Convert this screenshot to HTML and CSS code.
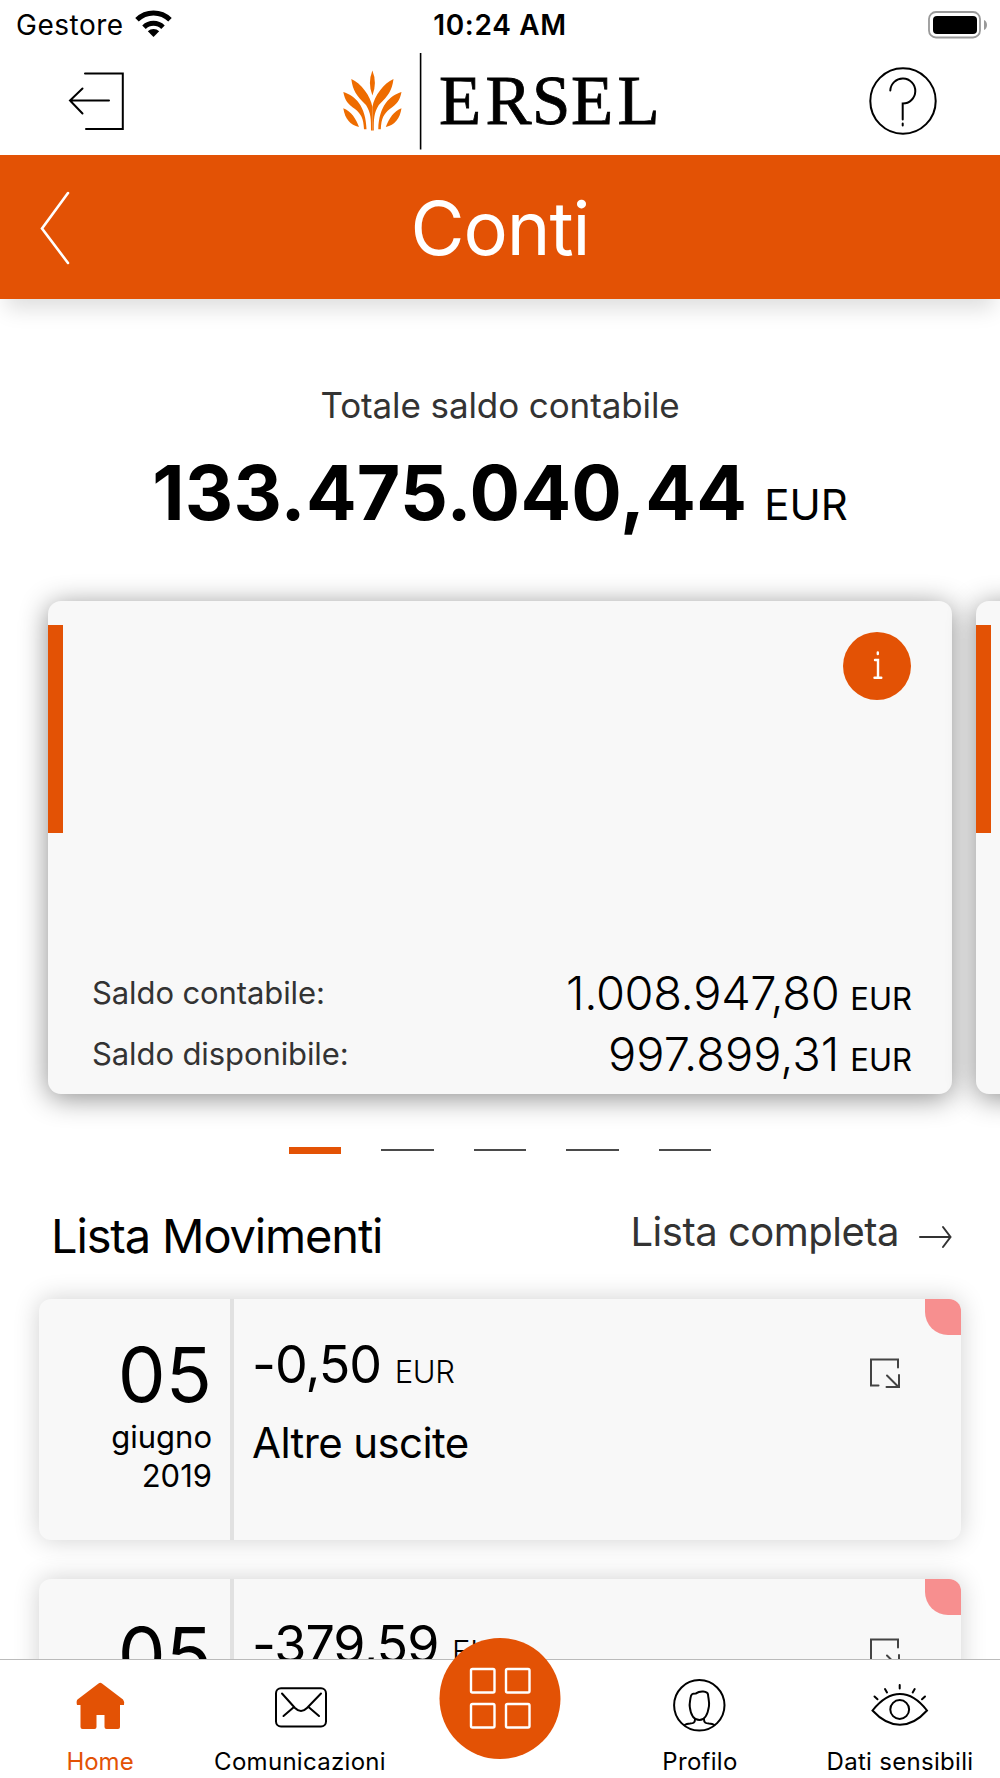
FILE: index.html
```
<!DOCTYPE html>
<html lang="it">
<head>
    <meta charset="UTF-8">
    <meta name="viewport" content="width=device-width, initial-scale=1.0">
    <title>Ersel - Conti</title>
    <link rel="stylesheet" href="styles.css">
</head>
<body>
    <!-- Status bar -->
    <div class="status-bar">
        <div class="carrier">
            <span>Gestore</span>
            <svg width="37" height="28" viewBox="0 0 37 28">
                <path d="M18.5 27 L12.8 21.3 A8.3 8.3 0 0 1 24.2 21.3 Z"/>
                <path d="M9 17.2 A13.6 13.6 0 0 1 28 17.2" fill="none" stroke="#000" stroke-width="5"/>
                <path d="M2 9.8 A23.6 23.6 0 0 1 35 9.8" fill="none" stroke="#000" stroke-width="5"/>
            </svg>
        </div>
        <div class="time">10:24 AM</div>
        <svg class="battery" width="60" height="28" viewBox="0 0 60 28">
            <rect x="1" y="1" width="51" height="25.5" rx="7" fill="none" stroke="#999" stroke-width="1.8"/>
            <rect x="5" y="5" width="44" height="18" rx="4"/>
            <path d="M56 9 C60 10.5 60 17.5 56 19 Z" fill="#999"/>
        </svg>
    </div>

    <!-- Brand header -->
    <header class="header">
        <svg class="icon-exit" width="60" height="64" viewBox="0 0 60 64">
            <path d="M18 5.5 H55.8 V61 H19 M42 32.5 H3 M15.5 20.5 L3 32.5 L15.5 45.5"/>
        </svg>
        <svg class="logo" width="320" height="105" viewBox="0 0 320 105">
            <g fill="#ee6c00">
                <path d="M32.4 20.5 Q27.4 33 32.4 45.5 Q37.4 33 32.4 20.5 Z"/>
                <path d="M11.3 29 C21 33 30.5 46 32.4 57 L32.4 80.5 L31 80.5 C31 69 31 63 26 55 C16 45 13 41 11.3 29 Z"/>
                <path d="M3.3 42 C15 45.5 26 56 26.5 79.3 L24 79.3 C23.5 68 21 64 15 59 C8 54 5 51 3.3 42 Z"/>
                <path d="M3.3 58.3 C11 61 16 69 19 77 C10 75 5 69 3.3 58.3 Z"/>
                <path d="M53.5 29 C43.8 33 34.3 46 32.4 57 L32.4 80.5 L33.8 80.5 C33.8 69 33.8 63 38.8 55 C48.8 45 51.8 41 53.5 29 Z"/>
                <path d="M61.5 42 C49.8 45.5 38.8 56 38.3 79.3 L40.8 79.3 C41.3 68 43.8 64 49.8 59 C56.8 54 59.8 51 61.5 42 Z"/>
                <path d="M61.5 58.3 C53.8 61 48.8 69 45.8 77 C54.8 75 59.8 69 61.5 58.3 Z"/>
            </g>
            <path d="M80.6 3 V99.5" stroke="#000" stroke-width="1.6"/>
            <text class="logo-text" x="99 145.5 192 231 277.5" y="74">ERSEL</text>
        </svg>
        <svg class="icon-help" width="70" height="70" viewBox="0 0 70 70">
            <circle cx="35" cy="35" r="32.7"/>
            <path d="M22.3 24.5 A12.5 12.5 0 1 1 34.7 37.5 V53.5 M34.7 57.5 V59.5"/>
        </svg>
    </header>

    <!-- Page title -->
    <div class="title-bar">
        <svg class="icon-back" width="30" height="76" viewBox="0 0 30 76">
            <path d="M28 3 L2 38.5 L28 73"/>
        </svg>
        <h1>Conti</h1>
    </div>

    <main class="content">
        <!-- Total balance -->
        <section class="total">
            <p class="total-label">Totale saldo contabile</p>
            <p class="total-value"><b>133.475.040,44</b><span>EUR</span></p>
        </section>

        <!-- Accounts carousel -->
        <section class="carousel">
            <article class="account">
                <div class="account-top">
                    <div class="accent"></div>
                    <svg class="icon-info" width="68" height="68" viewBox="0 0 68 68">
                        <circle cx="34" cy="34" r="34" fill="#e35205"/>
                        <path d="M32 28 H35 V45.7 M31.5 45.7 H38.3 M34.8 20.5 V22"/>
                    </svg>
                </div>
                <div class="balance">
                    <span class="balance-label">Saldo contabile:</span>
                    <span class="balance-value first">1.008.947,80</span>
                    <span class="currency">EUR</span>
                </div>
                <div class="balance">
                    <span class="balance-label">Saldo disponibile:</span>
                    <span class="balance-value">997.899,31</span>
                    <span class="currency">EUR</span>
                </div>
            </article>
            <article class="account">
                <div class="account-top">
                    <div class="accent"></div>
                </div>
            </article>
        </section>

        <div class="pager">
            <span class="active"></span>
            <span></span>
            <span></span>
            <span></span>
            <span></span>
        </div>

        <!-- Movements -->
        <section class="movements">
            <div class="movements-head">
                <h2>Lista Movimenti</h2>
                <a class="full-list">
                    <span>Lista completa</span>
                    <svg width="34" height="24" viewBox="0 0 34 24">
                        <path d="M1 12 H31 M24 2 L31.5 12 L24 22"/>
                    </svg>
                </a>
            </div>

            <article class="movement">
                <div class="date">
                    <span class="day">05</span>
                    <span>giugno</span>
                    <span>2019</span>
                </div>
                <div class="details">
                    <p class="amount">-0,50 <span>EUR</span></p>
                    <p class="description">Altre uscite</p>
                </div>
                <svg class="icon-open" width="32" height="32" viewBox="0 0 32 32">
                    <path d="M29 10.5 V2.5 H2 V28.5 H9.5"/>
                    <path d="M18 18.5 L29 29.5 M30 18 V30 H17.5"/>
                </svg>
                <div class="corner"></div>
            </article>

            <article class="movement">
                <div class="date">
                    <span class="day">05</span>
                </div>
                <div class="details">
                    <p class="amount">-379,59 <span>EUR</span></p>
                </div>
                <svg class="icon-open" width="32" height="32" viewBox="0 0 32 32">
                    <path d="M29 10.5 V2.5 H2 V28.5 H9.5"/>
                    <path d="M18 18.5 L29 29.5 M30 18 V30 H17.5"/>
                </svg>
                <div class="corner"></div>
            </article>
        </section>
    </main>

    <!-- Bottom navigation -->
    <nav class="tab-bar">
        <a class="tab active">
            <svg width="60" height="60" viewBox="0 0 60 60">
                <path d="M28.5 8.5 Q30.3 6.8 32 8.5 L53 24.5 Q54.5 26 54 30 H50 V52 Q50 54 48 54 H36.5 Q34.5 54 34.5 52 V40 H26.5 V52 Q26.5 54 24.5 54 H12.5 Q10.5 54 10.5 52 V30 H7 Q6 26 7.5 24.5 Z" fill="#e35205"/>
            </svg>
            <span>Home</span>
        </a>
        <a class="tab">
            <svg class="line-icon" width="60" height="60" viewBox="0 0 60 60">
                <rect x="6" y="13.2" width="50" height="38.3" rx="5"/>
                <path d="M12 18.5 L25 33 Q31 39 37 33 L51 18.5 M13.5 41 L24 32 M49 41 L38.5 32"/>
            </svg>
            <span>Comunicazioni</span>
        </a>
        <a class="tab menu">
            <svg class="menu-button" width="121" height="121" viewBox="0 0 121 121">
                <circle cx="60" cy="60.5" r="60.5" fill="#e35205"/>
                <g fill="none" stroke="#fff" stroke-width="2.4">
                    <rect x="31" y="31" width="23.5" height="23.5" rx="1.5"/>
                    <rect x="66" y="31" width="23.5" height="23.5" rx="1.5"/>
                    <rect x="31" y="66" width="23.5" height="23.5" rx="1.5"/>
                    <rect x="66" y="66" width="23.5" height="23.5" rx="1.5"/>
                </g>
            </svg>
        </a>
        <a class="tab">
            <svg class="line-icon" width="60" height="60" viewBox="0 0 60 60">
                <circle cx="29.3" cy="30.3" r="25.2"/>
                <path d="M20.5 23 C21 18.5 23 18.3 26 18.4 C30 15.5 37.5 16 38 19.5 C38.5 24 39.5 27 39 31 C38 38 35.5 45 29.5 45 C23 45 20.5 38 19.8 32 C19.2 29 20 27 20.5 23 Z"/>
                <path d="M25 44.5 C25 48 23 48.3 20 48.5 C17 48.6 16 49 14.5 50 M34 44.5 C34 48 36 48.3 39 48.5 C42 48.6 43 49 44.5 50"/>
            </svg>
            <span>Profilo</span>
        </a>
        <a class="tab">
            <svg class="line-icon" width="60" height="60" viewBox="0 0 60 60">
                <path d="M2.5 35.5 C20 13.5 40 13.5 57 35.5 C40 54.5 20 54.5 2.5 35.5 Z"/>
                <circle cx="29.7" cy="34.5" r="9.4"/>
                <path d="M29.7 10 V13.5 M15 14 L17 17.5 M44.7 14 L42.7 17.5 M4.5 21.5 L7.5 24.3 M55 21.5 L52 24.3"/>
            </svg>
            <span>Dati sensibili</span>
        </a>
    </nav>
</body>
</html>
```
FILE: styles.css
```
/* General styles */
* {
    margin: 0;
    padding: 0;
    box-sizing: border-box;
}

body {
    display: flex;
    flex-direction: column;
    width: 1000px;
    height: 1778px;
    overflow: hidden;
    background-color: #fff;
    color: #000;
    font-family: Inter, "Liberation Sans", sans-serif;
}

svg {
    display: block;
    flex-shrink: 0;
    overflow: visible;
}

/* Status bar */
.status-bar {
    display: grid;
    grid-template-columns: 1fr auto 1fr;
    height: 50px;
    padding: 0 16px;
    font-size: 28px;
    line-height: 50px;
}

.carrier {
    display: flex;
    gap: 11px;
    letter-spacing: 0.5px;
}

.carrier svg {
    margin-top: 10px;
}

.time {
    font-weight: 600;
    letter-spacing: 0.7px;
}

.battery {
    justify-self: end;
    margin: 11px -4px 0 0;
}

/* Brand header */
.header {
    display: grid;
    grid-template-columns: 1fr auto 1fr;
    height: 105px;
    padding: 0 62px;
}

.icon-exit {
    margin: 18px 0 0 5px;
}

.icon-exit,
.icon-help,
.icon-back,
.icon-info,
.icon-open,
.full-list svg,
.line-icon {
    fill: none;
    stroke: #000;
    stroke-width: 2;
    stroke-linecap: round;
}

.icon-help {
    justify-self: end;
    margin-top: 16px;
}

.logo-text {
    font-family: "Liberation Serif", serif;
    font-size: 69px;
    stroke: #000;
    stroke-width: 0.8;
}

/* Title bar */
.title-bar {
    position: relative;
    z-index: 1;
    display: grid;
    grid-template-columns: 1fr auto 1fr;
    align-items: center;
    height: 144px;
    padding: 0 40px;
    background-color: #e35205;
    color: #fff;
    box-shadow: 0 16px 20px -6px rgba(0, 0, 0, 0.13);
}

.icon-back {
    stroke: #fff;
    stroke-width: 2.6;
}

.title-bar h1 {
    padding-top: 1px;
    font-size: 74px;
    font-weight: 400;
    line-height: 144px;
    letter-spacing: -1.1px;
}

/* Content */
.content {
    flex: 1;
    min-height: 0;
    overflow: hidden;
}

.total {
    padding-top: 84px;
    text-align: center;
}

.total-label {
    font-size: 35px;
    line-height: 44px;
    letter-spacing: -0.1px;
    color: #333;
}

.total-value {
    height: 90px;
    margin-top: 21px;
    line-height: 90px;
    white-space: nowrap;
}

.total-value b {
    font-size: 75px;
    font-weight: 700;
    letter-spacing: 0.25px;
}

.total-value span {
    margin-left: 17px;
    font-size: 42px;
}

/* Accounts carousel */
.carousel {
    display: flex;
    gap: 24px;
    margin-top: 63px;
    padding-left: 48px;
}

.account {
    flex: 0 0 904px;
    height: 493px;
    border-radius: 13px;
    background-color: #f8f8f8;
    box-shadow: 0 4px 28px rgba(0, 0, 0, 0.45);
}

.account-top {
    display: flex;
    justify-content: space-between;
    height: 362px;
    padding: 24px 41px 0 0;
}

.accent {
    width: 15px;
    height: 208px;
    background-color: #e35205;
}

.icon-info {
    margin-top: 7px;
    stroke: #fff;
    stroke-width: 2.4;
}

.icon-info circle {
    stroke: none;
}

.balance {
    display: flex;
    align-items: baseline;
    height: 60.5px;
    padding: 0 40px 0 44px;
    line-height: 60px;
}

.balance-label {
    flex: 1;
    font-size: 31px;
    letter-spacing: -0.1px;
    color: #333;
    transform: translateY(-6px);
}

.balance-value {
    font-size: 47px;
    font-weight: 300;
}

.balance-value.first {
    letter-spacing: -0.35px;
}

.currency {
    margin-left: 11px;
    font-size: 31px;
}

/* Carousel pager */
.pager {
    display: flex;
    align-items: center;
    justify-content: center;
    gap: 40px;
    height: 8px;
    margin-top: 52px;
}

.pager span {
    width: 52.5px;
    height: 2px;
    background-color: #4a4a4a;
}

.pager .active {
    height: 7px;
    background-color: #e35205;
}

/* Movements */
.movements-head {
    display: flex;
    justify-content: space-between;
    height: 91px;
    margin-top: 54px;
    padding: 0 47px 0 51px;
    line-height: 56px;
}

.movements-head h2 {
    font-size: 47px;
    font-weight: 400;
    letter-spacing: -1.15px;
}

.full-list {
    display: flex;
    gap: 20px;
    font-size: 40px;
    line-height: 47px;
    letter-spacing: -0.5px;
    color: #333;
}

.full-list svg {
    margin-top: 17px;
    stroke: #333;
}

.movement {
    position: relative;
    display: flex;
    height: 241px;
    margin: 0 39px 39px;
    border-radius: 12px;
    background-color: #f8f8f8;
    box-shadow: 0 0 26px rgba(0, 0, 0, 0.19);
}

.date {
    display: flex;
    flex-direction: column;
    width: 195px;
    padding: 30px 18px 0 0;
    border-right: 4px solid #e1e1e1;
    font-size: 31px;
    line-height: 38.5px;
    text-align: right;
}

.day {
    height: 89px;
    font-size: 76px;
    line-height: 90px;
}

.details {
    flex: 1;
    padding: 34px 0 0 18px;
}

.amount {
    height: 64px;
    font-size: 52px;
    line-height: 64px;
    letter-spacing: -1px;
}

.amount span {
    font-size: 31px;
    font-weight: 300;
    letter-spacing: -0.3px;
}

.description {
    margin-top: 18px;
    font-size: 42px;
    line-height: 56px;
    letter-spacing: -0.6px;
}

.icon-open {
    margin: 58px 60px 0 0;
    stroke: #444;
}

.corner {
    position: absolute;
    top: 0;
    right: 0;
    width: 36px;
    height: 36px;
    border-radius: 0 12px 0 23px;
    background-color: #f78f8f;
}

/* Bottom navigation */
.tab-bar {
    position: relative;
    z-index: 1;
    display: grid;
    grid-template-columns: repeat(5, 1fr);
    height: 119px;
    border-top: 1px solid #bbb;
    background-color: #fff;
}

.tab {
    display: flex;
    flex-direction: column;
    align-items: center;
    padding-top: 15px;
    font-size: 24px;
    line-height: 30px;
    letter-spacing: 0.3px;
    white-space: nowrap;
}

.tab span {
    margin-top: 12px;
}

.tab.active {
    color: #e35205;
    letter-spacing: 0;
}

.menu {
    padding: 0;
}

.menu-button {
    margin-top: -22px;
}
```
